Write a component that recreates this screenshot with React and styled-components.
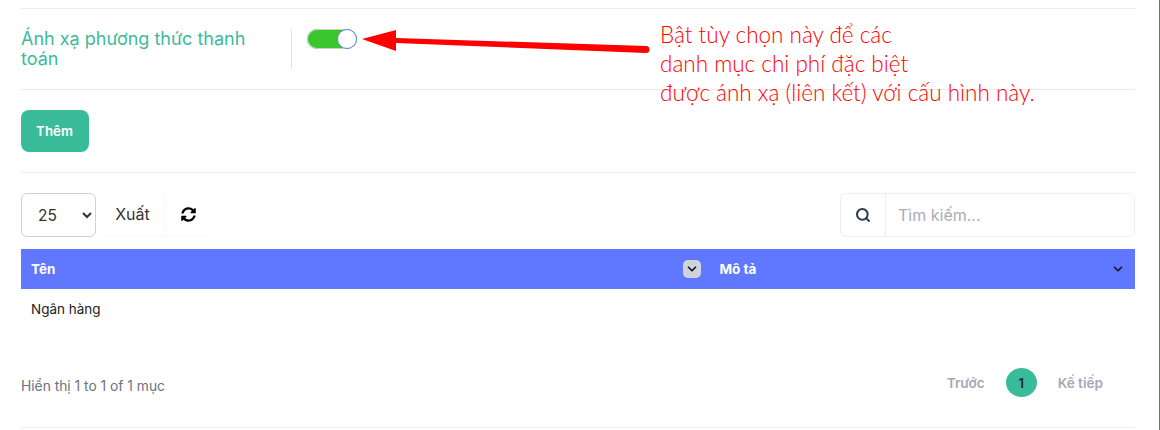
import React from 'react';
import styled, { createGlobalStyle } from 'styled-components';
import { FaSyncAlt } from 'react-icons/fa';
import { FiSearch, FiChevronDown } from 'react-icons/fi';

const GlobalStyle = createGlobalStyle`
  html, body { margin: 0; padding: 0; background: #fff; }
  body { font-family: Inter, "Liberation Sans", sans-serif; color: #1f2937; }
`;

const Page = styled.div`
  position: relative;
  width: 1160px;
  height: 430px;
  box-sizing: border-box;
  padding: 8px 24px 0 21px;
  border-right: 1px solid #4f8a2b;
  overflow: hidden;
`;

const SettingRow = styled.div`
  display: flex;
  align-items: flex-start;
  height: 82px;
  box-sizing: border-box;
  padding-top: 20px;
  border-top: 1px solid #ebebeb;
  border-bottom: 1px solid #ebebeb;
`;

const SettingLabel = styled.div`
  width: 271px;
  height: 40px;
  box-sizing: border-box;
  padding-right: 20px;
  border-right: 1px solid #e3e3e3;
  font-size: 18px;
  line-height: 20px;
  color: #3cbb9c;
`;

const Track = styled.div`
  position: relative;
  width: 50px;
  height: 20px;
  margin-left: 15px;
  border-radius: 10px;
  background: #3cc62e;
  box-shadow: inset 0 0 0 1px #c4d8c0;
`;

const Knob = styled.span`
  position: absolute;
  right: 0;
  top: 0;
  width: 20px;
  height: 20px;
  box-sizing: border-box;
  border-radius: 50%;
  background: #fff;
  border: 1px solid #5b86e8;
`;

const AddSection = styled.div`
  height: 83px;
  box-sizing: border-box;
  padding-top: 20px;
  border-bottom: 1px solid #ebebeb;
`;

const AddButton = styled.button`
  display: block;
  width: 68px;
  height: 42px;
  padding: 0 1px 0 0;
  border: 0;
  border-radius: 8px;
  background: #3abc9b;
  color: #fff;
  font: 600 13.3px Inter, sans-serif;
`;

const Toolbar = styled.div`
  display: flex;
  justify-content: space-between;
  align-items: flex-start;
  margin-top: 20px;
`;

const ToolGroup = styled.div`
  display: flex;
  align-items: flex-start;
`;

const PageSize = styled.select`
  width: 75px;
  height: 44px;
  box-sizing: border-box;
  padding: 0 0 0 12px;
  border: 1px solid #d1d1d6;
  border-radius: 6px;
  background: #fff;
  color: #333;
  font: 15.5px Inter, sans-serif;
`;

const ExportGroup = styled.div`
  display: flex;
  height: 42px;
  margin-left: 5px;
  border-radius: 6px;
  box-shadow: 0 1px 2px rgba(0, 0, 0, 0.03);
`;

const ExportButton = styled.div`
  display: flex;
  align-items: center;
  justify-content: center;
  width: 64px;
  box-sizing: border-box;
  border-right: 1px solid #f8f8f8;
  font-size: 16px;
  color: #333;
`;

const RefreshButton = styled.div`
  display: flex;
  align-items: center;
  justify-content: center;
  width: 46px;
  font-size: 15px;
  color: #000;
`;

const SearchBox = styled.div`
  display: flex;
  width: 295px;
  height: 44px;
  box-sizing: border-box;
  border: 1px solid #ebeef3;
  border-radius: 6px;
`;

const SearchIcon = styled.div`
  display: flex;
  align-items: center;
  justify-content: center;
  width: 45px;
  box-sizing: border-box;
  border-right: 1px solid #ebeef3;
  font-size: 16px;
  color: #2d3a4a;

  svg { stroke-width: 3; }
`;

const SearchInput = styled.input`
  flex: 1;
  min-width: 0;
  padding: 0 12px;
  border: 0;
  outline: 0;
  background: transparent;
  font: 16px Inter, sans-serif;

  &::placeholder { color: #a9adb8; opacity: 1; }
`;

const Table = styled.table`
  width: 100%;
  margin-top: 12px;
  border-collapse: collapse;
  table-layout: fixed;
`;

const HeadCell = styled.th`
  position: relative;
  width: ${({ $width }) => $width || 'auto'};
  height: 40px;
  padding: 0 10px;
  background: #5f78ff;
  color: #fff;
  font-size: 13.5px;
  font-weight: 700;
  text-align: left;
`;

const SortHandle = styled.span`
  position: absolute;
  right: 8px;
  top: 11px;
  display: flex;
  align-items: center;
  justify-content: center;
  width: 18px;
  height: 18px;
  border-radius: 5px;
  background: ${({ $boxed }) => ($boxed ? '#d1d3da' : 'transparent')};
  color: #111827;
  font-size: 14px;

  svg { stroke-width: 3; }
`;

const BodyCell = styled.td`
  height: 40px;
  padding: 0 10px;
  font-size: 13.5px;
  color: #222;
`;

const Footer = styled.div`
  display: flex;
  justify-content: space-between;
  align-items: flex-start;
  height: 99px;
  box-sizing: border-box;
  padding: 39px 32px 0 0;
  border-bottom: 1px solid #ebebeb;
`;

const Summary = styled.div`
  margin-top: 10px;
  font-size: 13.8px;
  line-height: 17px;
  color: #6b7280;
`;

const Pager = styled.div`
  display: flex;
  align-items: center;
  gap: 21px;
`;

const PagerLink = styled.span`
  font-size: 13.6px;
  font-weight: 600;
  color: #a5a8b8;
`;

const PagerCurrent = styled.span`
  display: flex;
  align-items: center;
  justify-content: center;
  width: 31px;
  height: 29px;
  border-radius: 50%;
  background: #3abc9b;
  color: #1f2937;
  font-size: 13px;
  font-weight: 600;
`;

const Note = styled.div`
  position: absolute;
  left: 660px;
  top: 20px;
  font-family: Lato, "Open Sans", sans-serif;
  font-size: 22.5px;
  font-weight: 300;
  line-height: 29px;
  color: #f00;
  white-space: pre-line;
`;

const ArrowSvg = styled.svg`
  position: absolute;
  left: 360px;
  top: 28px;
`;

export default function App() {
  return (
    <>
      <GlobalStyle />
      <Page>
        <SettingRow>
          <SettingLabel>Ánh xạ phương thức thanh toán</SettingLabel>
          <Track><Knob /></Track>
        </SettingRow>
        <AddSection>
          <AddButton>Thêm</AddButton>
        </AddSection>
        <Toolbar>
          <ToolGroup>
            <PageSize defaultValue="25">
              <option>10</option>
              <option>25</option>
              <option>50</option>
            </PageSize>
            <ExportGroup>
              <ExportButton>Xuất</ExportButton>
              <RefreshButton><FaSyncAlt /></RefreshButton>
            </ExportGroup>
          </ToolGroup>
          <SearchBox>
            <SearchIcon><FiSearch /></SearchIcon>
            <SearchInput placeholder="Tìm kiếm..." />
          </SearchBox>
        </Toolbar>
        <Table>
          <thead>
            <tr>
              <HeadCell $width="60%">Tên<SortHandle $boxed><FiChevronDown /></SortHandle></HeadCell>
              <HeadCell>Mô tả<SortHandle><FiChevronDown /></SortHandle></HeadCell>
            </tr>
          </thead>
          <tbody>
            <tr>
              <BodyCell>Ngân hàng</BodyCell>
              <BodyCell />
            </tr>
          </tbody>
        </Table>
        <Footer>
          <Summary>Hiển thị 1 to 1 of 1 mục</Summary>
          <Pager>
            <PagerLink>Trước</PagerLink>
            <PagerCurrent>1</PagerCurrent>
            <PagerLink>Kế tiếp</PagerLink>
          </Pager>
        </Footer>
        <ArrowSvg width="295" height="30" viewBox="0 0 295 30">
          <path d="M2 11 L36 2 L36 10 L286 18 A3.5 3.5 0 0 1 286 25 L36 15 L36 23 Z" fill="#f00" />
        </ArrowSvg>
        <Note>{'Bật tùy chọn này để các\ndanh mục chi phí đặc biệt\nđược ánh xạ (liên kết) với cấu hình này.'}</Note>
      </Page>
    </>
  );
}
